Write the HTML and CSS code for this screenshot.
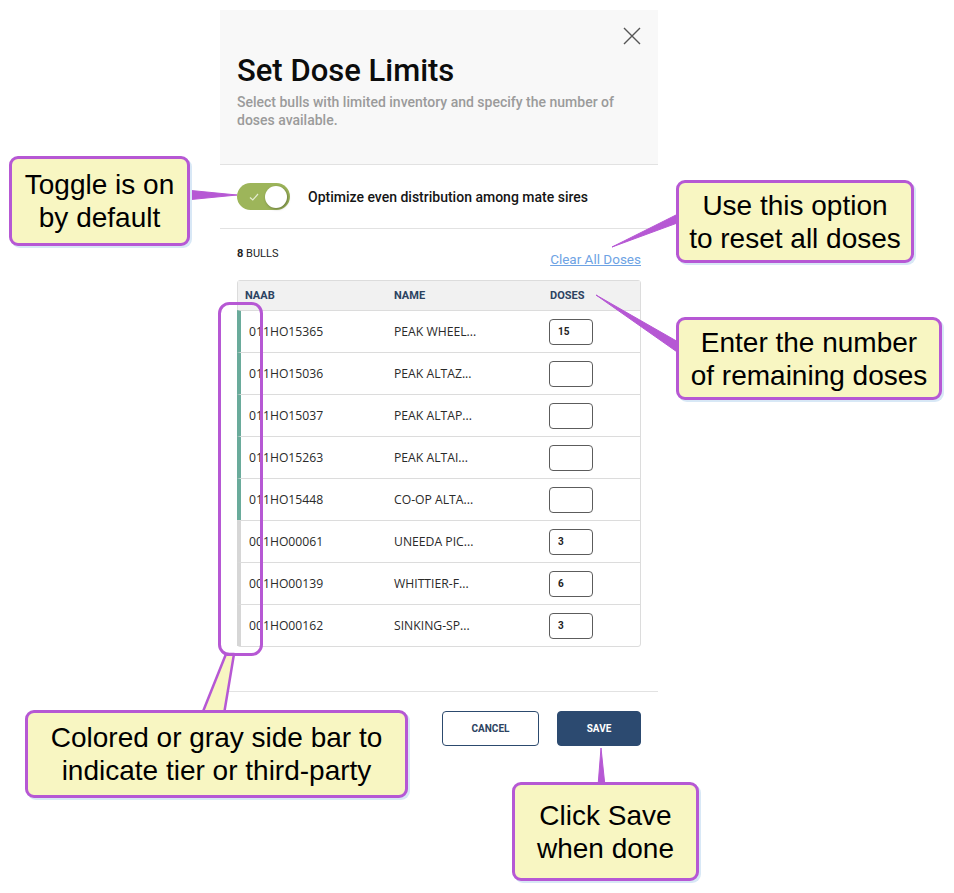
FILE: index.html
```html
<!DOCTYPE html>
<html>
<head>
    <link rel="stylesheet" href="styles.css">
</head>
<body>

<div class="page">

    <div class="modal">
        <header class="modal-head">
            <div class="close-row">
                <svg class="close" width="18" height="18" viewBox="0 0 18 18">
                    <path d="M1 1 L17 17 M17 1 L1 17" stroke="#555" stroke-width="1.4" fill="none"/>
                </svg>
            </div>
            <h1 class="title">Set Dose Limits</h1>
            <p class="subtitle">Select bulls with limited inventory and specify the number of doses available.</p>
        </header>

        <div class="toggle-row">
            <div class="toggle">
                <svg class="check" width="10" height="8" viewBox="0 0 10 8">
                    <path d="M1 4.5 L3.8 7 L9 1" stroke="#e4ecd0" stroke-width="1.2" fill="none"/>
                </svg>
                <span class="knob"></span>
            </div>
            <span class="toggle-label">Optimize even distribution among mate sires</span>
        </div>

        <section class="bulls">
            <div class="bulls-top">
                <span class="count"><b>8</b> BULLS</span>
                <a class="clear" href="#">Clear All Doses</a>
            </div>

            <div class="table">
                <div class="thead">
                    <span>NAAB</span>
                    <span>NAME</span>
                    <span>DOSES</span>
                </div>
                <div class="row tier">
                    <span>011HO15365</span><span>PEAK WHEEL...</span><span><input class="dose" value="15"></span>
                </div>
                <div class="row tier">
                    <span>011HO15036</span><span>PEAK ALTAZ...</span><span><input class="dose" value=""></span>
                </div>
                <div class="row tier">
                    <span>011HO15037</span><span>PEAK ALTAP...</span><span><input class="dose" value=""></span>
                </div>
                <div class="row tier">
                    <span>011HO15263</span><span>PEAK ALTAI...</span><span><input class="dose" value=""></span>
                </div>
                <div class="row tier">
                    <span>011HO15448</span><span>CO-OP ALTA...</span><span><input class="dose" value=""></span>
                </div>
                <div class="row third">
                    <span>001HO00061</span><span>UNEEDA PIC...</span><span><input class="dose" value="3"></span>
                </div>
                <div class="row third">
                    <span>001HO00139</span><span>WHITTIER-F...</span><span><input class="dose" value="6"></span>
                </div>
                <div class="row third">
                    <span>001HO00162</span><span>SINKING-SP...</span><span><input class="dose" value="3"></span>
                </div>
            </div>
        </section>

        <footer class="modal-foot">
            <button class="btn cancel">CANCEL</button>
            <button class="btn save">SAVE</button>
        </footer>
    </div>

    <!-- annotation layer -->
    <svg class="pointers" width="954" height="893" viewBox="0 0 954 893">
        <g fill="#b658d4" stroke="#b658d4" stroke-width="1" stroke-linejoin="round">
            <polygon points="186,190 237,195 186,200"/>
            <polygon points="680,213 612,247 680,222"/>
            <polygon points="680,343 596,295 680,354"/>
            <polygon points="598,786 601,748 605,786"/>
        </g>
        <polygon points="226,654 234,654 224,714 202,714" fill="#f8f6c2" stroke="#b658d4" stroke-width="2.5" stroke-linejoin="round"/>
        <rect x="219.5" y="303.5" width="42" height="351" rx="10" fill="none" stroke="#b658d4" stroke-width="3"/>
    </svg>

    <div class="note note-toggle">Toggle is on<br>by default</div>
    <div class="note note-clear">Use this option<br>to reset all doses</div>
    <div class="note note-doses">Enter the number<br>of remaining doses</div>
    <div class="note note-bar">Colored or gray side bar to<br>indicate tier or third-party</div>
    <div class="note note-save">Click Save<br>when done</div>

</div>

</body>
</html>
```

FILE: styles.css
```css
body {
    margin: 0;
    background-color: white;
    font-family: Roboto, sans-serif;
    color: #111;
}

.page {
    position: relative;
    width: 954px;
    height: 893px;
    overflow: hidden;
}

.modal {
    margin: 10px 0 0 220px;
    width: 438px;
}

.modal-head {
    background-color: #f8f8f8;
    height: 155px;
    box-sizing: border-box;
    padding: 17px 17px 0 17px;
    border-bottom: 1px solid #e2e2e2;
}

.close-row {
    display: flex;
    justify-content: flex-end;
    height: 20px;
}

.title {
    margin: 4px 0 0 0;
    font-size: 31px;
    font-weight: 500;
    line-height: 40px;
    color: #0c0c0c;
}

.subtitle {
    margin: 2px 0 0 0;
    max-width: 395px;
    font-size: 14px;
    font-weight: 500;
    line-height: 18px;
    color: #9b9b9b;
}

.toggle-row {
    display: flex;
    align-items: center;
    gap: 18px;
    height: 63px;
    padding: 0 17px;
    border-bottom: 1px solid #e2e2e2;
}

.toggle {
    position: relative;
    display: flex;
    align-items: center;
    width: 53px;
    height: 27px;
    border-radius: 14px;
    background-color: #9db55a;
    box-sizing: border-box;
    padding: 0 3px 0 12px;
    justify-content: space-between;
}

.knob {
    width: 22px;
    height: 22px;
    border-radius: 50%;
    background-color: white;
    box-shadow: 1px 1px 3px rgba(0, 0, 0, 0.35);
}

.toggle-label {
    font-size: 14px;
    font-weight: 500;
    color: #151515;
}

.bulls {
    padding: 0 17px;
}

.bulls-top {
    display: flex;
    justify-content: space-between;
    align-items: flex-end;
    height: 51px;
    padding-bottom: 13px;
    box-sizing: border-box;
}

.count {
    font-size: 11px;
    color: #222;
    align-self: flex-start;
    margin-top: 18px;
}

.clear {
    font-size: 13.5px;
    color: #6ea3e4;
    text-decoration: underline;
}

.table {
    border: 1px solid #dcdcdc;
    border-radius: 3px;
}

.thead {
    display: grid;
    grid-template-columns: 156px 156px 1fr;
    height: 29px;
    align-items: center;
    background-color: #f1f1f1;
    font-size: 11px;
    font-weight: 700;
    color: #2c4361;
}

.thead span:first-child {
    padding-left: 7px;
}

.row {
    display: grid;
    grid-template-columns: 153px 155px 1fr;
    align-items: center;
    height: 42px;
    box-sizing: border-box;
    border-top: 1px solid #dcdcdc;
    border-left: 4px solid #d6d6d6;
    margin-left: -1px;
    font-family: "Open Sans", sans-serif;
    font-size: 12.2px;
    color: #2a2a2a;
}

.row span:first-child {
    padding-left: 8px;
}

.row.tier {
    border-left-color: #6aab9b;
}

.dose {
    width: 44px;
    height: 26px;
    box-sizing: border-box;
    border: 1px solid #5c5c5c;
    border-radius: 4px;
    padding: 0 8px;
    font-family: Roboto, sans-serif;
    font-size: 10px;
    font-weight: 700;
    color: #222;
    background: white;
}

.modal-foot {
    margin-top: 44px;
    border-top: 1px solid #e2e2e2;
    display: flex;
    justify-content: flex-end;
    gap: 18px;
    padding: 19px 17px 0 17px;
}

.btn {
    height: 35px;
    border-radius: 4px;
    font-family: Roboto, sans-serif;
    font-size: 10px;
    font-weight: 700;
}

.cancel {
    width: 97px;
    background: white;
    border: 1px solid #2c4a6e;
    color: #2c4361;
}

.save {
    width: 84px;
    background-color: #2c4a70;
    border: 1px solid #2c4a70;
    color: white;
}

/* callouts */

.pointers {
    position: absolute;
    left: 0;
    top: 0;
}

.note {
    position: absolute;
    box-sizing: border-box;
    display: flex;
    align-items: center;
    justify-content: center;
    text-align: center;
    background-color: #f8f6c2;
    border: 3px solid #b658d4;
    border-radius: 9px;
    box-shadow: 2px 2px 0 #d8e8f6;
    font-family: "Liberation Sans", Arial, sans-serif;
    font-size: 28px;
    line-height: 33px;
    color: black;
}

.note-toggle {
    left: 9px;
    top: 156px;
    width: 181px;
    height: 90px;
}

.note-clear {
    left: 676px;
    top: 180px;
    width: 238px;
    height: 83px;
}

.note-doses {
    left: 676px;
    top: 317px;
    width: 266px;
    height: 83px;
}

.note-bar {
    left: 25px;
    top: 710px;
    width: 383px;
    height: 88px;
}

.note-save {
    left: 512px;
    top: 782px;
    width: 187px;
    height: 99px;
}
```
